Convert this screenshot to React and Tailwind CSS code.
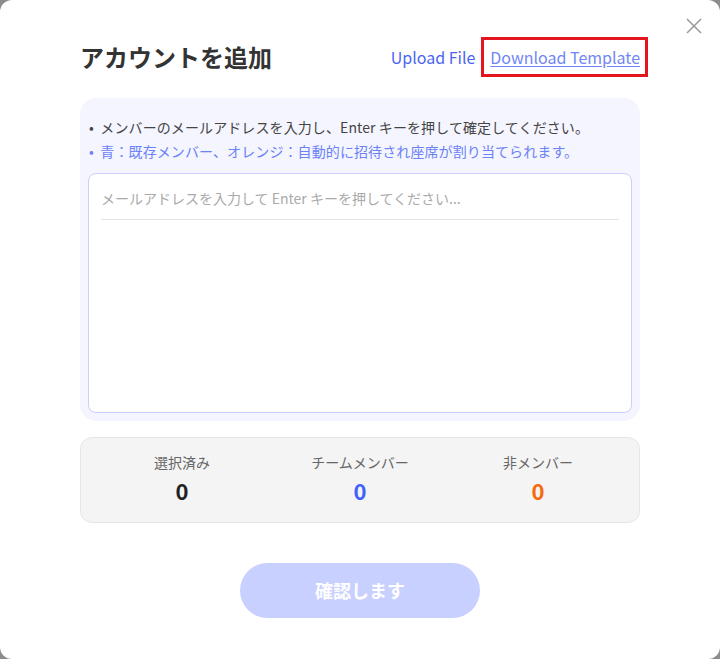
import React, { useState } from "react";

const FONT = { fontFamily: '"Noto Sans CJK JP", "Noto Sans", sans-serif' };

function Stat({ label, value, color }) {
  return (
    <div className="flex flex-col items-center">
      <div className="text-[14px] leading-[20px] text-[#666]">{label}</div>
      <div className={`mt-[5px] text-[22px] leading-[26px] font-bold ${color}`}>{value}</div>
    </div>
  );
}

export default function App() {
  const [email, setEmail] = useState("");

  return (
    <div className="h-[659px] w-[720px] bg-[#8c8c8c]" style={FONT}>
      <div className="relative h-full w-full rounded-[12px] bg-white px-[80px] pt-[37px]">
        <button className="absolute right-[18px] top-[18px] text-[#999]" type="button">
          <svg width="16" height="16" viewBox="0 0 16 16" fill="none" stroke="currentColor" strokeWidth="1.5">
            <path d="M1 1L15 15M15 1L1 15" />
          </svg>
        </button>

        <div className="flex h-[40px] items-center justify-between">
          <div className="text-[24px] font-bold text-[#333]">アカウントを追加</div>
          <div className="flex items-center gap-[6px] -mr-[8px]">
            <span className="text-[16px] text-[#4a66f0]">Upload File</span>
            <span className="border-[3px] border-[#e3161f] py-[3px] pl-[6px] pr-[5px] text-[16px] leading-[28px] text-[#7186f5] underline underline-offset-[2px]">
              Download Template
            </span>
          </div>
        </div>

        <div className="mt-[21px] rounded-[16px] bg-[#f4f5fe] px-[8px] pb-[8px] pt-[17px]">
          <div className="px-[1px] text-[14px] leading-[24px] tracking-[0.1px]">
            <div className="text-[#444]">•&nbsp; メンバーのメールアドレスを入力し、Enter キーを押して確定してください。</div>
            <div className="text-[#6b82f7]">•&nbsp; 青：既存メンバー、オレンジ：自動的に招待され座席が割り当てられます。</div>
          </div>
          <div className="mt-[10px] h-[240px] rounded-[8px] border border-[#c8d0fb] bg-white px-[12px] pt-[10px]">
            <input
              value={email}
              onChange={(e) => setEmail(e.target.value)}
              autoFocus
              placeholder="メールアドレスを入力して Enter キーを押してください..."
              className="box-content h-[28px] w-full border-b border-[#e3e3e3] bg-transparent pb-[7px] text-[14px] text-[#333] placeholder:text-[#aaa] focus:outline-none"
            />
          </div>
        </div>

        <div className="mt-[16px] grid h-[86px] grid-cols-3 items-center rounded-[12px] border border-[#e6e6e6] bg-[#f4f4f4] px-[12px] pb-[5px]">
          <Stat label="選択済み" value="0" color="text-[#222]" />
          <Stat label="チームメンバー" value="0" color="text-[#3f63f5]" />
          <Stat label="非メンバー" value="0" color="text-[#f56a0d]" />
        </div>

        <div className="mt-[40px] flex justify-center">
          <button
            type="button"
            className="h-[55px] w-[240px] rounded-full bg-[#c8d0ff] text-[18px] font-bold text-white"
          >
            確認します
          </button>
        </div>
      </div>
    </div>
  );
}
